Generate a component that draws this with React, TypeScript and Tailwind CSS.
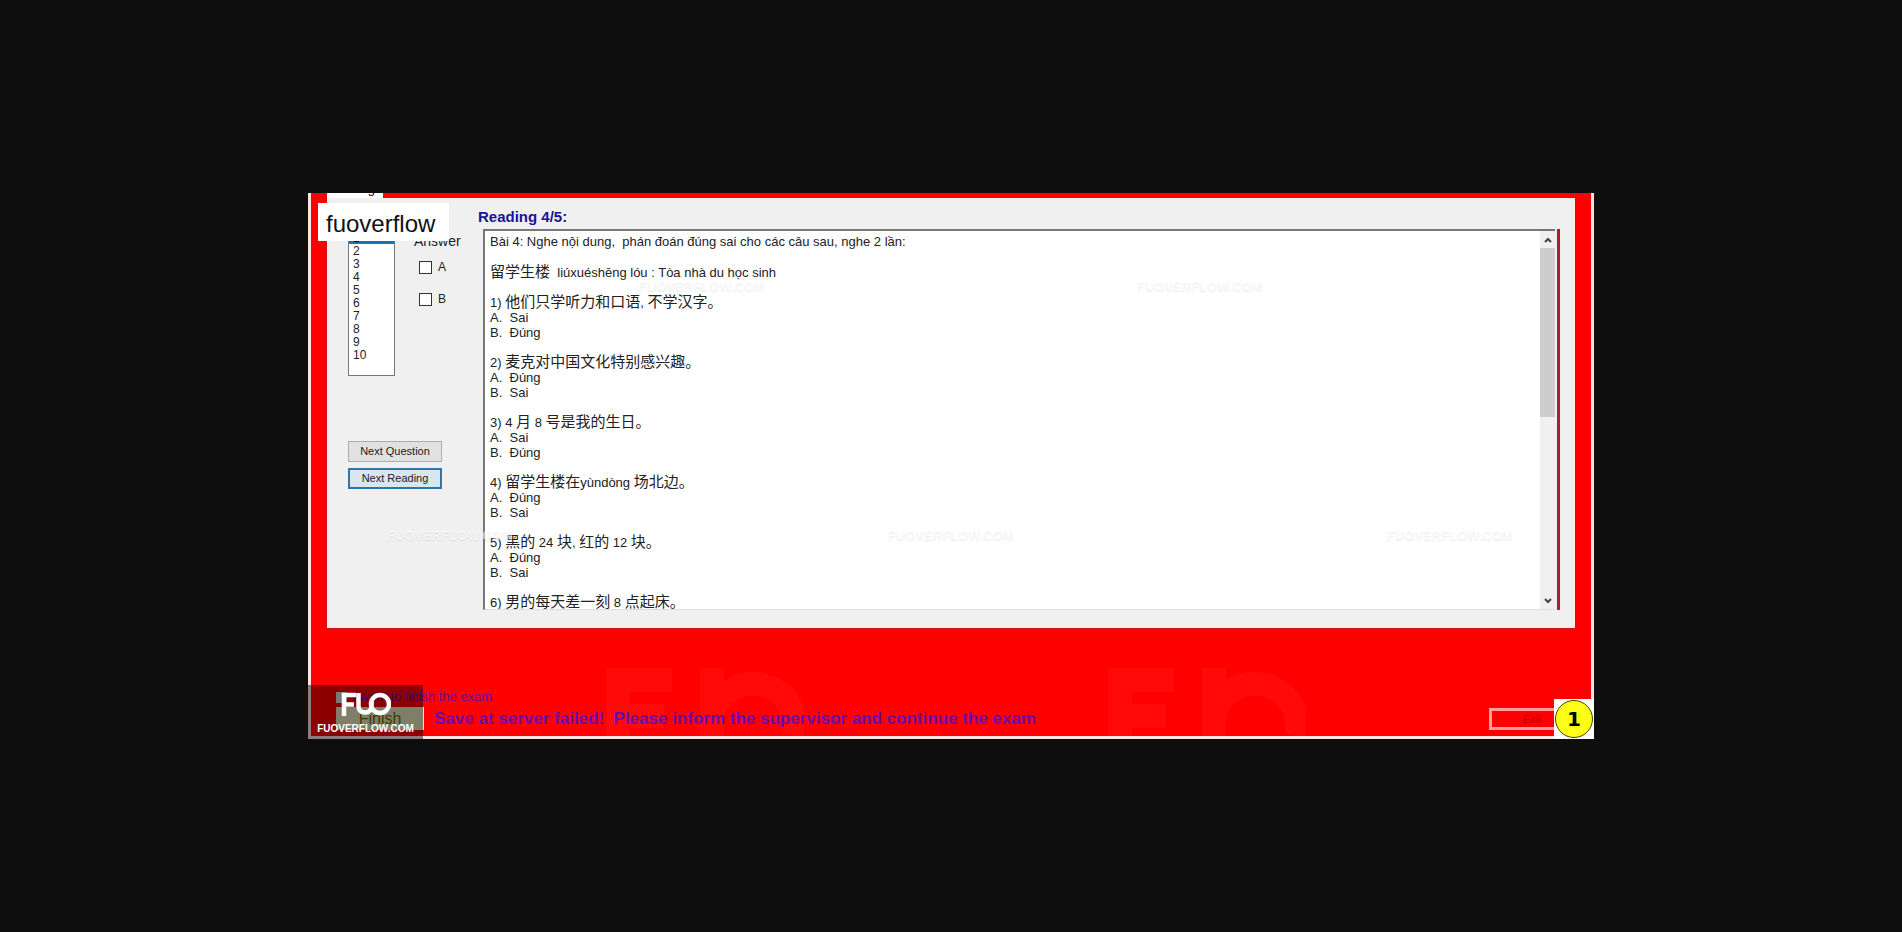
const groups: string[][] = [
  ['1) |他们只学听力和口语|, |不学汉字。', 'A.  Sai', 'B.  Đúng'],
  ['2) |麦克对中国文化特别感兴趣。', 'A.  Đúng', 'B.  Sai'],
  ['3) 4 |月| 8 |号是我的生日。', 'A.  Sai', 'B.  Đúng'],
  ['4) |留学生楼在|yùndòng |场北边。', 'A.  Đúng', 'B.  Sai'],
  ['5) |黑的| 24 |块|, |红的| 12 |块。', 'A.  Đúng', 'B.  Sai'],
  ['6) |男的每天差一刻| 8 |点起床。'],
];

function Line({ text }: { text: string }) {
  return (
    <p className="h-[15px] whitespace-pre">
      {text.split('|').map((part, i) => (
        <span key={i} className={/[\u3000-\u9fff]/.test(part) ? 'text-[15px]' : ''}>
          {part}
        </span>
      ))}
    </p>
  );
}

function Mark({ className }: { className: string }) {
  return (
    <span
      aria-hidden="true"
      className={`pointer-events-none absolute text-[13px] font-bold leading-[18px] text-white/60 [text-shadow:0_1px_1px_rgba(0,0,0,0.08)] ${className}`}
    >
      FUOVERFLOW.COM
    </span>
  );
}

function Ghost({ className }: { className: string }) {
  return (
    <svg aria-hidden="true" viewBox="0 0 200 70" className={`pointer-events-none absolute h-[70px] w-[200px] ${className}`}>
      <g fill="none" stroke="#ff0909" strokeWidth="24">
        <path d="M14 70V14H68M14 50H60" />
        <path d="M108 70V2M108 50a42 42 0 0 1 82 20" />
      </g>
    </svg>
  );
}

export default function App() {
  return (
    <main className="flex min-h-screen items-center justify-center bg-[#0e0e0e] font-['Liberation_Sans','Noto_Sans_CJK_SC',sans-serif] text-[#222]">
      <div className="relative w-full max-w-[1286px] border-x-3 border-b-3 border-[#ffe4e4] bg-[#ff0000]">
        <div className="px-4">
          <div className="relative flex h-[5px] w-[56px] items-end justify-end overflow-hidden bg-white pb-[3px] pr-2 text-[13px] leading-none text-black">
            <span>Reading</span>
          </div>
          <section className="flex h-[430px] border-2 border-t-0 border-[#ffeaea] bg-[#f0f0f0] pb-[16px] shadow-[0_0_0_1px_#c01818]">
            <div className="flex w-[149px] shrink-0 flex-col pl-[19px] pt-[30px]">
              <div className="flex gap-[24px]">
                <select
                  size={10}
                  defaultValue="1"
                  aria-label="Question"
                  className="mt-[2px] h-[146px] w-[47px] overflow-hidden border border-[#777] bg-white text-[12px] text-[#222]"
                >
                  {['1', '2', '3', '4', '5', '6', '7', '8', '9', '10'].map((n) => (
                    <option
                      key={n}
                      value={n}
                      className="h-[13px] min-h-0 px-[4px] py-0 leading-[13px] checked:bg-[linear-gradient(#1773b5,#1773b5)]"
                    >
                      {n}
                    </option>
                  ))}
                </select>
                <fieldset className="pt-[5px]">
                  <legend className="float-left -ml-[5px] text-[14px] leading-4">Answer</legend>
                  <div className="clear-both flex flex-col gap-[19px] pt-[12px] text-[12px] leading-[13px]">
                    {['A', 'B'].map((a) => (
                      <label key={a} className="flex items-center gap-[6px]">
                        <input type="checkbox" className="size-[13px] appearance-none border border-[#333] bg-white" />
                        {a}
                      </label>
                    ))}
                  </div>
                </fieldset>
              </div>
              <div className="mt-[65px] flex w-[94px] flex-col gap-[6px] text-[11px]">
                <button className="h-[21px] border border-[#adadad] bg-[#e1e1e1]">Next Question</button>
                <button className="h-[21px] border-2 border-[#2a76ae] bg-[#d9e5ef]">Next Reading</button>
              </div>
            </div>
            <div className="flex min-w-0 flex-1 flex-col pr-[13px] pt-[10px]">
              <h1 className="h-[21px] text-[15px] font-bold leading-[18px] text-[#1c1296]">Reading 4/5:</h1>
              <div className="ml-[5px] flex min-h-0 flex-1 border-r-3 border-[#a52030]">
                <div className="mr-[2px] flex min-w-0 flex-1 border-b border-l-2 border-t-2 border-b-[#ddd] border-l-[#777] border-t-[#777] bg-white">
                  <article className="min-w-0 flex-1 overflow-hidden pl-[5px] pt-[3px] text-[13px] leading-[15px]">
                    <Line text="Bài 4: Nghe nội dung,  phán đoán đúng sai cho các câu sau, nghe 2 lần:" />
                    <div className="py-[15px]">
                      <Line text="留学生楼|  liúxuéshēng lóu : Tòa nhà du học sinh" />
                    </div>
                    <div className="flex flex-col gap-[14px]">
                      {groups.map((g, i) => (
                        <div key={i}>
                          {g.map((t, j) => (
                            <div key={j} className="first:pb-px">
                              <Line text={t} />
                            </div>
                          ))}
                        </div>
                      ))}
                    </div>
                  </article>
                  <div className="flex w-[15px] flex-col items-center bg-[#f0f0f0]">
                    <button aria-label="Scroll up" className="flex h-[17px] items-center">
                      <svg viewBox="0 0 8 6" className="h-[6px] w-[8px]" fill="none" stroke="#444" strokeWidth="2"><path d="M1 5 4 2l3 3" /></svg>
                    </button>
                    <div className="h-[169px] w-full bg-[#cdcdcd]" />
                    <button aria-label="Scroll down" className="mt-auto flex h-[17px] items-center">
                      <svg viewBox="0 0 8 6" className="h-[6px] w-[8px]" fill="none" stroke="#444" strokeWidth="2"><path d="m1 1 3 3 3-3" /></svg>
                    </button>
                  </div>
                </div>
              </div>
            </div>
          </section>
        </div>

        <Ghost className="bottom-0 left-[293px]" />
        <Ghost className="bottom-0 left-[795px]" />

        <footer className="relative pb-[6px] pl-[25px] pt-[62px] text-[#6a0cae]">
          <label className="flex items-center gap-[5px] text-[13px] leading-[14px]">
            <input type="checkbox" className="size-[11px] appearance-none bg-[#dddddd]" />
            I want to finish the exam
          </label>
          <div className="mt-[3px] flex items-center">
            <button className="h-[23px] w-[88px] bg-[#e8e8c0] pb-[2px] text-[16px] text-[#6a7000]">Finish</button>
            <p className="ml-[10px] flex-1 text-[17px] font-bold leading-5">Save at server failed!&nbsp; Please inform the supervisor and continue the exam</p>
            <button className="h-[22px] w-[102px] border-3 border-[#ff9c9c] pr-[16px] text-[11px] text-[#b00000]">Exit</button>
          </div>
        </footer>

        <Mark className="left-[328px] top-[85px]" />
        <Mark className="left-[826px] top-[85px]" />
        <Mark className="left-[76px] top-[334px]" />
        <Mark className="left-[577px] top-[334px]" />
        <Mark className="left-[1076px] top-[334px]" />

        <div className="absolute left-[7px] top-[10px] flex h-[38px] w-[131px] items-center bg-white pl-2 pt-[4px] text-[24px] leading-none text-[#111]">
          fuoverflow
        </div>
        <div className="absolute -bottom-[3px] -left-[3px] flex h-[54px] w-[115px] flex-col items-center bg-black/45 pt-[7px] text-white">
          <svg viewBox="0 0 50 24" className="h-[24px] w-[50px]" fill="none" stroke="#fff" strokeWidth="4.500">
            <path d="M3 24V3H15M3 12.500H13" />
            <path d="M17.500 1v12.500q0 7 6.500 7t6.500-7V10" />
            <circle cx="39" cy="12" r="9" />
          </svg>
          <span className="mt-[5px] text-[10px] font-bold leading-4">FUOVERFLOW.COM</span>
        </div>
        <div className="absolute -bottom-[3px] -right-[3px] flex size-[40px] items-center justify-center bg-white">
          <div className="flex size-[38px] items-center justify-center rounded-full border border-[#444400] bg-[#ffff14] font-['DejaVu_Sans',sans-serif] text-[20px] font-bold text-black">
            1
          </div>
        </div>
      </div>
    </main>
  );
}
